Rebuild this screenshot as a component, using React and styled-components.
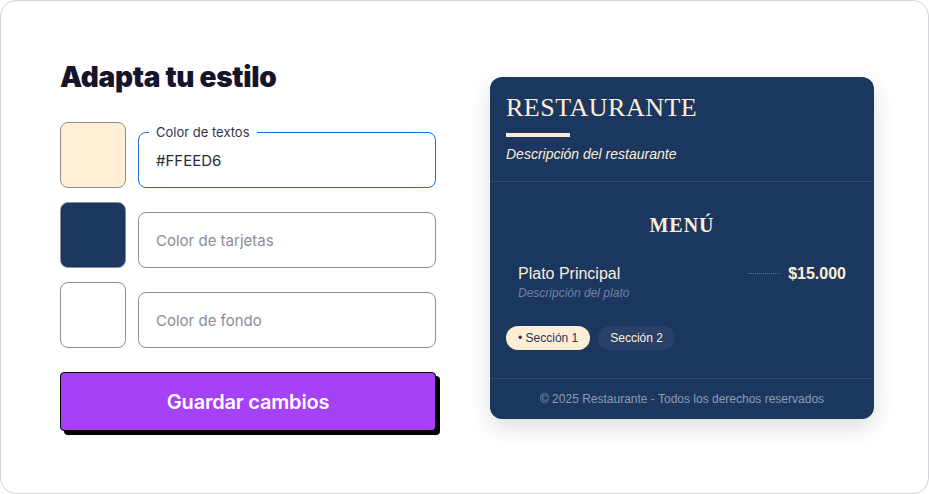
import React from 'react';
import styled, { createGlobalStyle } from 'styled-components';

const GlobalStyle = createGlobalStyle`
  * { box-sizing: border-box; }
  html, body { margin: 0; padding: 0; background: #fff; }
`;

const Frame = styled.div`
  width: 929px;
  height: 494px;
  border: 1px solid #d4d4d8;
  border-radius: 16px;
  background: #fff;
  display: flex;
  align-items: flex-start;
  gap: 54px;
  padding: 59px 0 0 59px;
`;

const Editor = styled.div`
  width: 376px;
  display: flex;
  flex-direction: column;
  font-family: Inter, 'Noto Sans', sans-serif;
`;

const Title = styled.h1`
  margin: 0 0 28px;
  font-size: 28px;
  line-height: 34px;
  font-weight: 900;
  letter-spacing: -0.3px;
  color: #16142b;
`;

const Rows = styled.div`
  display: flex;
  flex-direction: column;
  gap: 14px;
`;

const Row = styled.div`
  display: flex;
  align-items: flex-end;
  gap: 12px;
`;

const Swatch = styled.div`
  width: 66px;
  height: 66px;
  flex-shrink: 0;
  border-radius: 8px;
  border: 1px solid #8d8d99;
  background: ${p => p.color};
`;

const Field = styled.div`
  position: relative;
  flex: 1;
  height: 56px;
  border: 1px solid ${p => (p.focused ? '#1f6fc2' : '#8d8d99')};
  border-radius: 8px;
`;

const FieldLabel = styled.span`
  position: absolute;
  top: -9px;
  left: 10px;
  padding: 0 7px;
  background: #fff;
  font-size: 13px;
  line-height: 16px;
  color: #33334a;
`;

const Input = styled.input`
  width: 100%;
  height: 100%;
  border: none;
  outline: none;
  background: transparent;
  padding: 0 17px;
  font-family: inherit;
  font-size: 15px;
  color: #2a2a3c;

  &::placeholder {
    color: #8b8b97;
  }
`;

const SaveButton = styled.button`
  margin-top: 24px;
  height: 59px;
  width: 100%;
  background: #a541f6;
  border: 1px solid #000;
  border-radius: 4px;
  box-shadow: 4px 4px 0 #000;
  color: #fff;
  font-family: inherit;
  font-size: 20px;
  font-weight: 600;
  letter-spacing: -0.2px;
  cursor: pointer;
`;

const Card = styled.div`
  margin-top: 17px;
  width: 384px;
  background: #1b365f;
  border-radius: 12px;
  box-shadow: 0 8px 22px rgba(0, 0, 0, 0.14);
  overflow: hidden;
  color: #ffeed6;
  font-family: 'Liberation Sans', Arial, sans-serif;
`;

const CardHeader = styled.div`
  padding: 16px 16px 18px;
  border-bottom: 1px solid rgba(255, 255, 255, 0.1);
`;

const Brand = styled.h2`
  margin: 0;
  font-family: 'Liberation Serif', Georgia, serif;
  font-weight: 400;
  font-size: 26px;
  line-height: 30px;
  letter-spacing: 0.5px;
`;

const Bar = styled.div`
  width: 64px;
  height: 4px;
  margin-top: 10px;
  background: #ffeed6;
`;

const Tagline = styled.p`
  margin: 9px 0 0;
  font-size: 14px;
  line-height: 17px;
  font-style: italic;
`;

const MenuSection = styled.div`
  padding: 31px 16px 28px;
  border-bottom: 1px solid rgba(255, 255, 255, 0.1);
`;

const MenuTitle = styled.h3`
  margin: 0;
  text-align: center;
  font-family: 'Liberation Serif', Georgia, serif;
  font-weight: 700;
  font-size: 20px;
  line-height: 24px;
  letter-spacing: 1px;
`;

const Item = styled.div`
  margin-top: 27px;
  padding: 0 12px;
`;

const ItemTop = styled.div`
  display: flex;
  align-items: center;
`;

const ItemName = styled.span`
  flex: 1;
  font-size: 16px;
  line-height: 19px;
`;

const Dots = styled.span`
  width: 32px;
  margin: 0 8px;
  border-top: 1px dotted rgba(255, 255, 255, 0.3);
`;

const Price = styled.span`
  font-size: 16px;
  line-height: 19px;
  font-weight: 700;
`;

const ItemDesc = styled.p`
  margin: 3px 0 0;
  font-size: 12px;
  line-height: 14px;
  font-style: italic;
  color: rgba(200, 210, 225, 0.5);
`;

const Pills = styled.div`
  display: flex;
  gap: 8px;
  margin-top: 26px;
`;

const Pill = styled.span`
  height: 24px;
  line-height: 24px;
  padding: 0 12px;
  border-radius: 12px;
  font-size: 12px;
  background: ${p => (p.active ? '#ffeed6' : 'rgba(255, 255, 255, 0.06)')};
  color: ${p => (p.active ? '#1b365f' : '#ffeed6')};
`;

const Footer = styled.div`
  padding: 12px 16px;
  text-align: center;
  font-size: 12px;
  line-height: 16px;
  color: rgba(255, 255, 255, 0.5);
`;

const fields = [
  { color: '#FFEED6', label: 'Color de textos', value: '#FFEED6', placeholder: 'Color de textos', focused: true },
  { color: '#1b365f', placeholder: 'Color de tarjetas' },
  { color: '#ffffff', placeholder: 'Color de fondo' },
];

export default function App() {
  return (
    <>
      <GlobalStyle />
      <Frame>
        <Editor>
          <Title>Adapta tu estilo</Title>
          <Rows>
            {fields.map(f => (
              <Row key={f.placeholder}>
                <Swatch color={f.color} />
                <Field focused={f.focused}>
                  {f.label && <FieldLabel>{f.label}</FieldLabel>}
                  <Input defaultValue={f.value} placeholder={f.placeholder} />
                </Field>
              </Row>
            ))}
          </Rows>
          <SaveButton>Guardar cambios</SaveButton>
        </Editor>

        <Card>
          <CardHeader>
            <Brand>RESTAURANTE</Brand>
            <Bar />
            <Tagline>Descripción del restaurante</Tagline>
          </CardHeader>
          <MenuSection>
            <MenuTitle>MENÚ</MenuTitle>
            <Item>
              <ItemTop>
                <ItemName>Plato Principal</ItemName>
                <Dots />
                <Price>$15.000</Price>
              </ItemTop>
              <ItemDesc>Descripción del plato</ItemDesc>
            </Item>
            <Pills>
              <Pill active>• Sección 1</Pill>
              <Pill>Sección 2</Pill>
            </Pills>
          </MenuSection>
          <Footer>© 2025 Restaurante - Todos los derechos reservados</Footer>
        </Card>
      </Frame>
    </>
  );
}
